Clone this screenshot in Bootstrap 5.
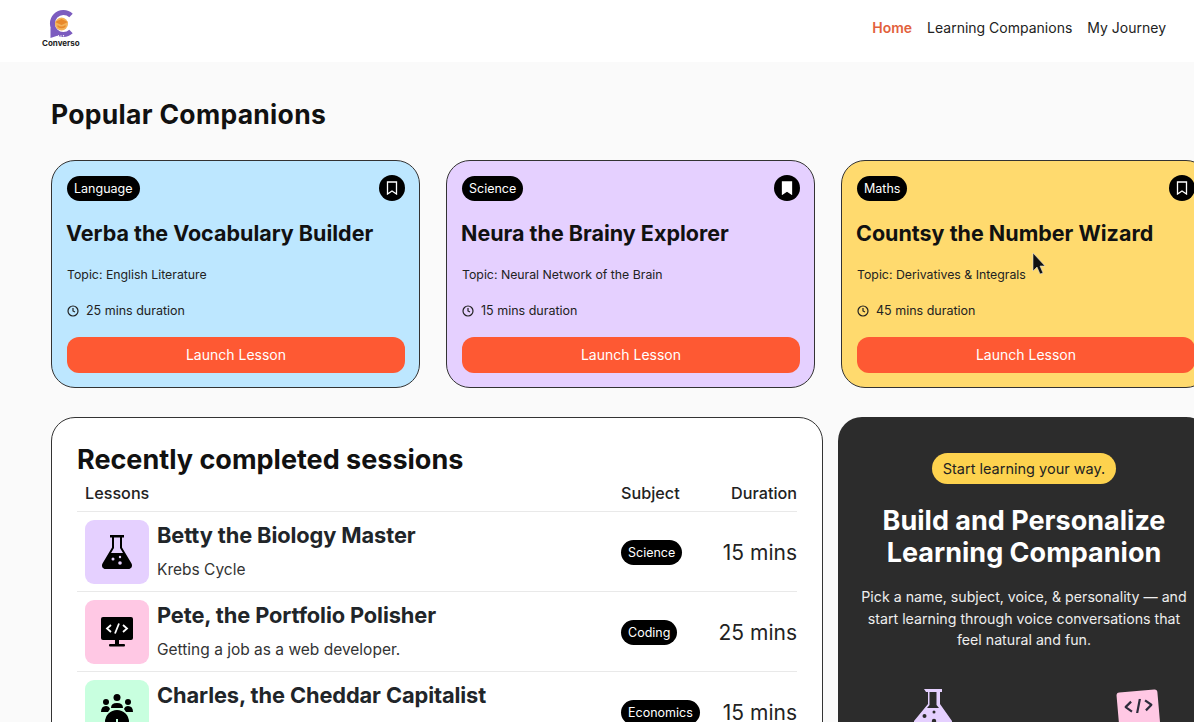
<!DOCTYPE html>
<html lang="en">
<head>
  <meta charset="UTF-8">
  <title>Converso</title>
  <meta name="viewport" content="width=device-width, initial-scale=1">
  <link rel="stylesheet" href="https://cdn.jsdelivr.net/npm/bootstrap@5.3.3/dist/css/bootstrap.min.css">
  <style>
    html, body { height: 722px; overflow: hidden; }
    body { background: #fafafa; color: #111; font-family: Inter, "Liberation Sans", sans-serif; position: relative; }
    .top-bar { background: #fff; height: 62px; padding: 0 28px 5px 42px; }
    .logo-name { font-size: 8px; font-weight: 700; line-height: 9px; color: #222; }
    .top-link { font-size: 14px; color: #222; text-decoration: none; }
    .top-link.active-link { color: #e2613c; font-weight: 600; }
    .top-links { gap: 15px; margin-bottom: 2px; }
    .page-body { padding: 0 0 0 51px; width: 1240px; }
    .page-title { font-size: 26.5px; font-weight: 700; line-height: 32px; margin: 36px 0 30px; letter-spacing: .3px; }
    .comp-card { width: 369px; height: 228px; flex: none; border: 1px solid #333; border-radius: 24px; padding: 14px 14px 15px 15px; }
    .bg-blue { background: #bde7ff; }
    .bg-purple { background: #e5d0ff; }
    .bg-yellow { background: #ffda6e; }
    .bg-rose { background: #ffc8e4; }
    .bg-mint { background: #c8ffdf; }
    .subject-pill { background: #000; color: #fff; font-size: 12.5px; line-height: 25px; height: 25px; padding: 0 7px; border-radius: 13px; display: inline-block; }
    .mark-btn { width: 26px; height: 26px; background: #000; border-radius: 50%; }
    .comp-title { font-size: 21.5px; font-weight: 700; line-height: 28px; margin: 18px 0 0 -1px; white-space: nowrap; }
    .comp-topic { font-size: 12.3px; line-height: 16px; margin: 20px 0 0; color: #222; }
    .comp-time { font-size: 12.5px; line-height: 16px; margin: 20px 0 0; color: #222; gap: 7px; }
    .launch-btn { background: #fe5933; color: #fff; font-size: 14px; height: 36px; line-height: 36px; border-radius: 12px; margin-top: 18px; padding: 0; border: 0; }
    .lower-row { margin-top: 29px; gap: 15px; }
    .sessions-panel { width: 772px; height: 340px; flex: none; background: #fff; border: 1px solid #333; border-radius: 24px; padding: 25px 25px 0; overflow: hidden; }
    .sessions-title { font-size: 27px; font-weight: 700; line-height: 33px; margin: 0; }
    .session-table { width: 720px; margin: 0; table-layout: fixed; }
    .session-table th { font-size: 16.2px; font-weight: 500; height: 35px; padding: 0 0 0 8px; vertical-align: middle; border-bottom: 1px solid #e9e9e9; color: #222; }
    .session-table td { height: 80px; padding: 2px 0 0 8px; vertical-align: middle; border-bottom: 1px solid #e9e9e9; }
    .thumb { width: 64px; height: 64px; border-radius: 9px; flex: none; }
    .session-info { padding-top: 2px; }
    .session-name { font-size: 21.8px; font-weight: 700; line-height: 26px; white-space: nowrap; letter-spacing: -.1px; }
    .session-sub { font-size: 15.5px; line-height: 20px; margin-top: 12px; color: #333; }
    .session-table td.session-time { font-size: 21px; line-height: 1; text-align: right; color: #222; white-space: nowrap; }
    .col-subject { width: 94px; }
    .col-time { width: 90px; }
    .build-panel { width: 372px; height: 340px; flex: none; background: #2c2c2c; border-radius: 24px; color: #fff; padding-top: 36px; overflow: hidden; }
    .start-pill { background: #fdd24e; color: #222; font-size: 14.5px; line-height: 31px; height: 31px; padding: 0 11px; border-radius: 16px; display: inline-block; }
    .build-title { font-size: 27px; font-weight: 700; line-height: 32px; margin: 21px 0 0; }
    .build-text { font-size: 14.2px; line-height: 21.5px; margin: 17px auto 0; width: 326px; color: #eee; }
    .build-icons { padding: 0 51px 0 74px; margin-top: 37px; }
    .code-sticker { width: 41px; height: 41px; background: #ffc8e4; border-radius: 3px; transform: rotate(-5deg); margin-top: 3px; }
    .fake-cursor { position: absolute; left: 1032px; top: 252px; }
  </style>
</head>
<body>
  <nav class="top-bar d-flex align-items-center justify-content-between">
    <div class="d-flex flex-column align-items-center">
      <svg width="28" height="29" viewBox="0 0 28 29">
        <path d="M24 5.500A11 11 0 1 0 24 21.500" fill="none" stroke="#7c5cbf" stroke-width="5"/>
        <path d="M3.500 18v10l9-3z" fill="#7c5cbf"/>
        <circle cx="14.500" cy="14" r="6.500" fill="#f3b25a"/>
        <path d="M8 12l6.500-3 6.500 3-6.500 3z" fill="#e8892a"/>
        <path d="M10.500 15q4 3 8 0v2q-4 2.500-8 0z" fill="#e8892a"/>
        <circle cx="11.500" cy="25.700" r=".7" fill="#fff"/><circle cx="14" cy="25.900" r=".7" fill="#fff"/><circle cx="16.500" cy="25.700" r=".7" fill="#fff"/>
      </svg>
      <span class="logo-name">Converso</span>
    </div>
    <div class="top-links d-flex">
      <a class="top-link active-link" href="#">Home</a>
      <a class="top-link" href="#">Learning Companions</a>
      <a class="top-link" href="#">My Journey</a>
    </div>
  </nav>

  <main class="page-body">
    <h1 class="page-title">Popular Companions</h1>

    <section class="d-flex" style="gap:26px">
      <article class="comp-card bg-blue">
        <div class="d-flex justify-content-between align-items-center">
          <span class="subject-pill">Language</span>
          <span class="mark-btn d-flex align-items-center justify-content-center">
            <svg width="12" height="14" viewBox="0 0 12 14"><path d="M1.500 1h9v12L6 10l-4.500 3z" fill="none" stroke="#fff" stroke-width="1.300"/></svg>
          </span>
        </div>
        <h2 class="comp-title">Verba the Vocabulary Builder</h2>
        <p class="comp-topic">Topic: English Literature</p>
        <div class="comp-time d-flex align-items-center">
          <svg width="12" height="12" viewBox="0 0 12 12"><circle cx="6" cy="6" r="5" fill="none" stroke="#222" stroke-width="1.200"/><path d="M6 3v3l2 1" fill="none" stroke="#222" stroke-width="1.200"/></svg>
          25 mins duration
        </div>
        <button class="launch-btn btn w-100">Launch Lesson</button>
      </article>

      <article class="comp-card bg-purple">
        <div class="d-flex justify-content-between align-items-center">
          <span class="subject-pill">Science</span>
          <span class="mark-btn d-flex align-items-center justify-content-center">
            <svg width="12" height="14" viewBox="0 0 12 14"><path d="M1.500 1h9v12L6 10l-4.500 3z" fill="#fff" stroke="#fff" stroke-width="1.300"/></svg>
          </span>
        </div>
        <h2 class="comp-title">Neura the Brainy Explorer</h2>
        <p class="comp-topic">Topic: Neural Network of the Brain</p>
        <div class="comp-time d-flex align-items-center">
          <svg width="12" height="12" viewBox="0 0 12 12"><circle cx="6" cy="6" r="5" fill="none" stroke="#222" stroke-width="1.200"/><path d="M6 3v3l2 1" fill="none" stroke="#222" stroke-width="1.200"/></svg>
          15 mins duration
        </div>
        <button class="launch-btn btn w-100">Launch Lesson</button>
      </article>

      <article class="comp-card bg-yellow">
        <div class="d-flex justify-content-between align-items-center">
          <span class="subject-pill">Maths</span>
          <span class="mark-btn d-flex align-items-center justify-content-center">
            <svg width="12" height="14" viewBox="0 0 12 14"><path d="M1.500 1h9v12L6 10l-4.500 3z" fill="none" stroke="#fff" stroke-width="1.300"/></svg>
          </span>
        </div>
        <h2 class="comp-title">Countsy the Number Wizard</h2>
        <p class="comp-topic">Topic: Derivatives &amp; Integrals</p>
        <div class="comp-time d-flex align-items-center">
          <svg width="12" height="12" viewBox="0 0 12 12"><circle cx="6" cy="6" r="5" fill="none" stroke="#222" stroke-width="1.200"/><path d="M6 3v3l2 1" fill="none" stroke="#222" stroke-width="1.200"/></svg>
          45 mins duration
        </div>
        <button class="launch-btn btn w-100">Launch Lesson</button>
      </article>
    </section>

    <section class="lower-row d-flex">
      <div class="sessions-panel">
        <h2 class="sessions-title">Recently completed sessions</h2>
        <table class="session-table table">
          <thead>
            <tr><th>Lessons</th><th class="col-subject">Subject</th><th class="col-time text-end">Duration</th></tr>
          </thead>
          <tbody>
            <tr>
              <td>
                <div class="d-flex gap-2">
                  <div class="thumb bg-purple d-flex align-items-center justify-content-center">
                    <svg width="32" height="36" viewBox="0 0 32 36"><path d="M9 1h14v2.500h-2v10l9.500 16c1.500 3-.5 5.500-3 5.500H4.500c-2.500 0-4.500-2.500-3-5.500L11 13.500v-10H9z" fill="#000"/><path d="M13 3.500h6V14l3 5H10l3-5z" fill="#e5d0ff"/><circle cx="12" cy="25" r="1.500" fill="#e5d0ff"/><circle cx="19" cy="23" r="1.200" fill="#e5d0ff"/><circle cx="19" cy="29" r="1.800" fill="#e5d0ff"/></svg>
                  </div>
                  <div class="session-info">
                    <div class="session-name">Betty the Biology Master</div>
                    <div class="session-sub">Krebs Cycle</div>
                  </div>
                </div>
              </td>
              <td><span class="subject-pill">Science</span></td>
              <td class="session-time">15 mins</td>
            </tr>
            <tr>
              <td>
                <div class="d-flex gap-2">
                  <div class="thumb bg-rose d-flex align-items-center justify-content-center">
                    <svg width="32" height="32" viewBox="0 0 32 32"><rect x="0" y="1" width="32" height="23" rx="2" fill="#000"/><rect x="14" y="24" width="4" height="5" fill="#000"/><rect x="8" y="28" width="16" height="2.500" rx="1" fill="#000"/><path d="M10 9l-4 3.500 4 3.500M22 9l4 3.500-4 3.500M18 7.500l-4 10" fill="none" stroke="#fff" stroke-width="1.800"/></svg>
                  </div>
                  <div class="session-info">
                    <div class="session-name">Pete, the Portfolio Polisher</div>
                    <div class="session-sub">Getting a job as a web developer.</div>
                  </div>
                </div>
              </td>
              <td><span class="subject-pill">Coding</span></td>
              <td class="session-time">25 mins</td>
            </tr>
            <tr>
              <td>
                <div class="d-flex gap-2">
                  <div class="thumb bg-mint d-flex align-items-center justify-content-center">
                    <svg width="32" height="36" viewBox="0 0 32 36"><circle cx="16" cy="3.500" r="3.500" fill="#000"/><circle cx="5" cy="8" r="3" fill="#000"/><circle cx="27" cy="8" r="3" fill="#000"/><path d="M10 14q0-5 6-5t6 5zM0 18q0-6 5-6 3 0 4 3l-2 3zM32 18q0-6-5-6-3 0-4 3l2 3z" fill="#000"/><circle cx="16" cy="28" r="12" fill="#000"/><path d="M11 36v-7h2v7zM15 36v-11h2v11zM19 36v-8h2v8z" fill="#c8ffdf"/></svg>
                  </div>
                  <div class="session-info">
                    <div class="session-name">Charles, the Cheddar Capitalist</div>
                  </div>
                </div>
              </td>
              <td><span class="subject-pill">Economics</span></td>
              <td class="session-time">15 mins</td>
            </tr>
          </tbody>
        </table>
      </div>

      <aside class="build-panel text-center">
        <span class="start-pill">Start learning your way.</span>
        <h2 class="build-title">Build and Personalize<br>Learning Companion</h2>
        <p class="build-text">Pick a name, subject, voice, &amp; personality — and start learning through voice conversations that feel natural and fun.</p>
        <div class="build-icons d-flex justify-content-between align-items-start">
          <svg width="42" height="46" viewBox="0 0 42 46"><path d="M12 1h18v3h-2v12l12 17v12H2V33l14-17V4h-2z" fill="#e5d0ff"/><path d="M17.500 4h7v13l2.500 3H15l2.500-3z" fill="#2c2c2c"/><circle cx="12.500" cy="28" r="2" fill="#2c2c2c"/><circle cx="22" cy="24" r="1.500" fill="#2c2c2c"/><circle cx="22" cy="33" r="2.200" fill="#2c2c2c"/></svg>
          <div class="code-sticker d-flex align-items-start justify-content-center pt-2">
            <svg width="28" height="14" viewBox="0 0 28 14"><path d="M7 2l-6 5 6 5M21 2l6 5-6 5M16 0l-4 14" fill="none" stroke="#2c2c3c" stroke-width="2.200"/></svg>
          </div>
        </div>
      </aside>
    </section>
  </main>

  <svg class="fake-cursor" width="14" height="24" viewBox="0 0 14 24"><path d="M1 1v18l4-4 3 7 3-1-3-7h5z" fill="#111" stroke="#ddd" stroke-width=".6"/></svg>

  <script src="https://cdn.jsdelivr.net/npm/bootstrap@5.3.3/dist/js/bootstrap.bundle.min.js"></script>
</body>
</html>
